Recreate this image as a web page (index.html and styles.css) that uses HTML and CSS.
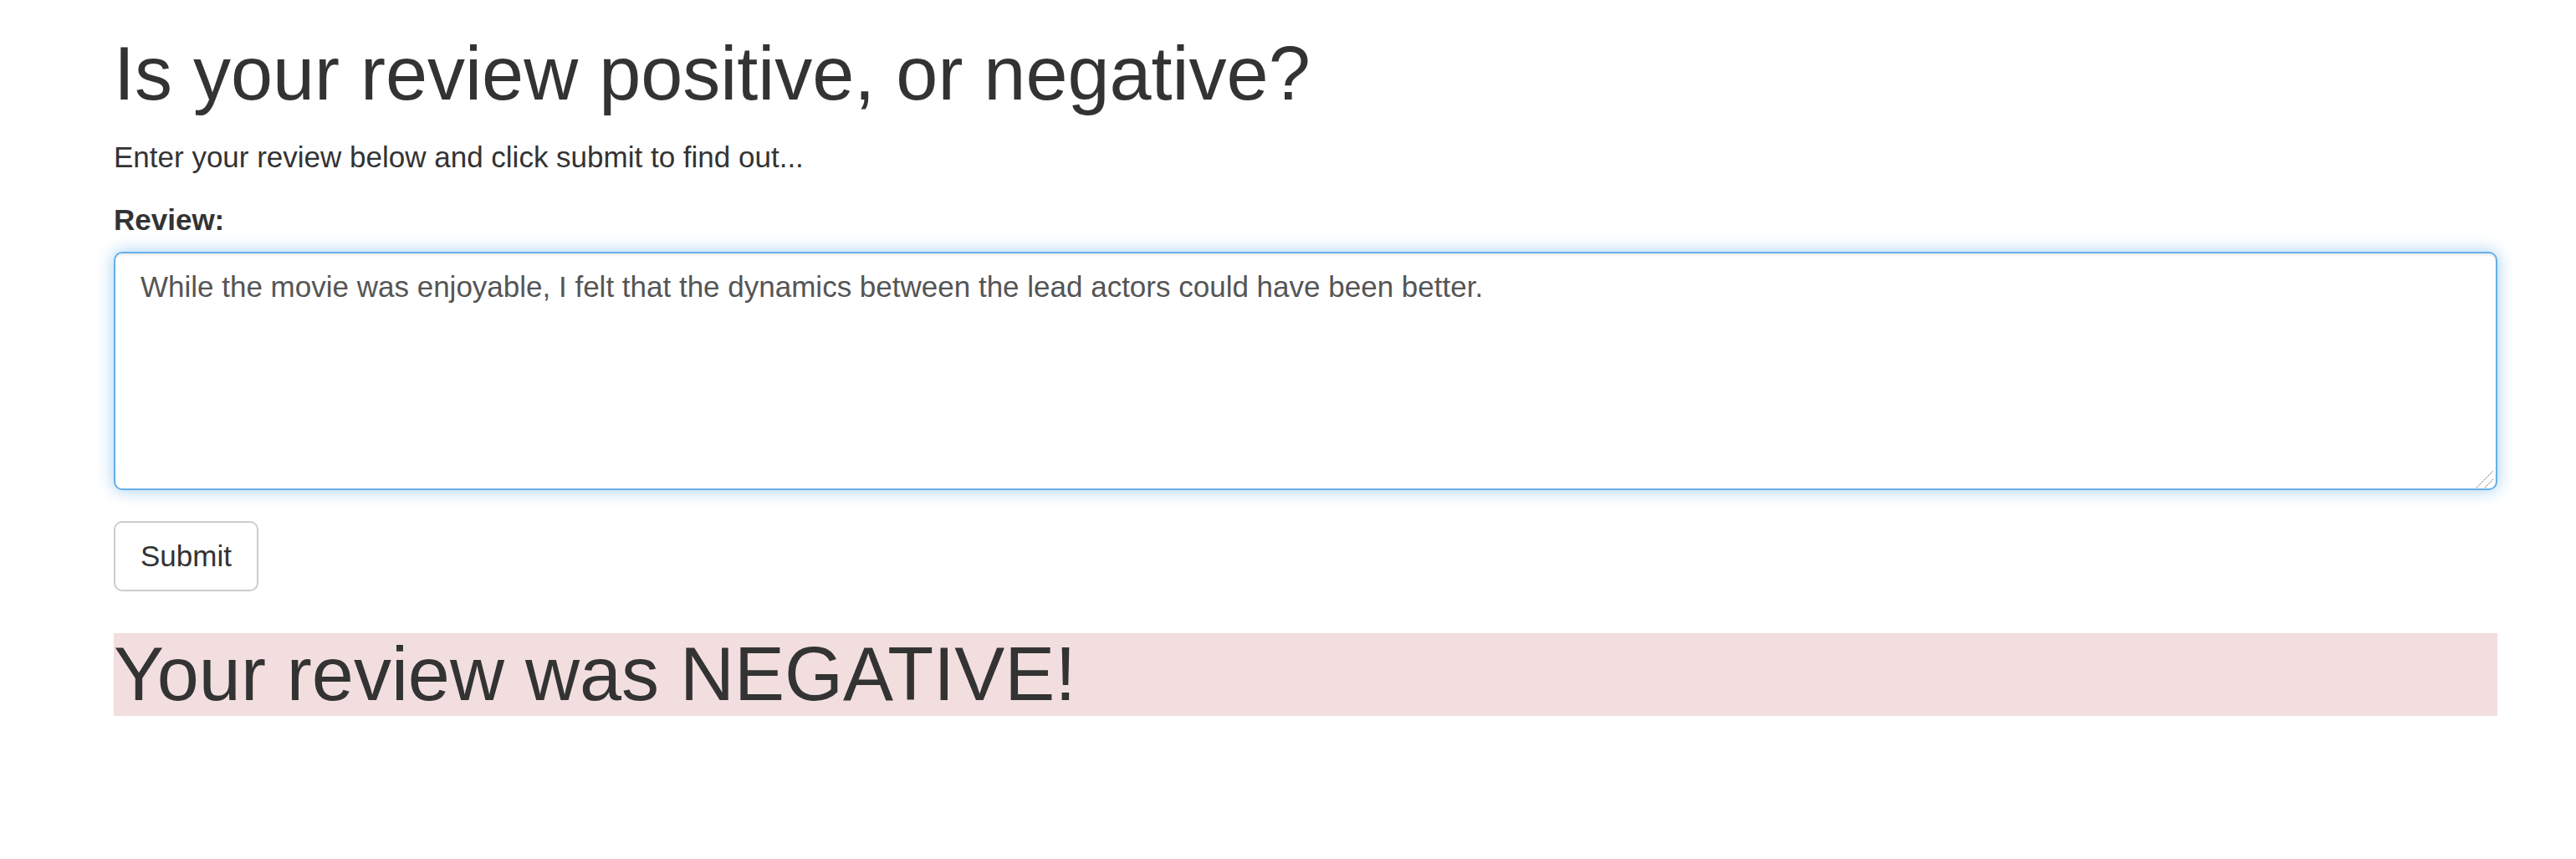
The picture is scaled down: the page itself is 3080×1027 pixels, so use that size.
FILE: index.html
```html
<!DOCTYPE html>
<html lang="en">
<head>
<meta charset="utf-8">
<title>Sentiment Review</title>
<link rel="stylesheet" href="styles.css">
</head>
<body>
<div class="container">
  <h1 class="title">Is your review positive, or negative?</h1>
  <p class="lead-text">Enter your review below and click submit to find out...</p>
  <form class="review-form">
    <div class="form-group">
      <label class="field-label" for="review">Review:</label>
      <div class="textarea-wrap">
        <textarea class="form-control is-focused" id="review" rows="5">While the movie was enjoyable, I felt that the dynamics between the lead actors could have been better.</textarea>
        <svg class="grip" width="24" height="24" viewBox="0 0 24 24" aria-hidden="true">
          <line x1="2" y1="23" x2="22" y2="3" stroke="#666" stroke-width="1" stroke-dasharray="1.5 1"/>
          <line x1="12" y1="23" x2="22" y2="13" stroke="#666" stroke-width="1" stroke-dasharray="1.5 1"/>
        </svg>
      </div>
    </div>
    <button type="button" class="btn btn-default">Submit</button>
  </form>
  <h1 class="result bg-danger">Your review was NEGATIVE!</h1>
</div>
</body>
</html>
```
FILE: styles.css
```css
* {
  box-sizing: border-box;
}

html, body {
  margin: 0;
  padding: 0;
  background: #fff;
}

body {
  font-family: "Liberation Sans", Arial, Helvetica, sans-serif;
  font-size: 35px;
  line-height: 50px;
  color: #333;
}

.container {
  width: 2850px;
  margin-left: 136px;
}

.title {
  font-family: inherit;
  font-weight: 500;
  font-size: 90px;
  line-height: 99px;
  margin: 39px 0 25px;
  color: #333;
}

.lead-text {
  margin: 0 0 25px;
}

.review-form {
  margin: 0;
}

.form-group {
  margin-bottom: 37.5px;
}

.field-label {
  display: inline-block;
  max-width: 100%;
  margin-bottom: 12.5px;
  font-weight: bold;
}

.textarea-wrap {
  position: relative;
}

.grip {
  position: absolute;
  right: 3px;
  bottom: 2px;
  pointer-events: none;
}

.form-control {
  display: block;
  width: 100%;
  height: 285px;
  padding: 15px 30px;
  font-family: inherit;
  font-size: 35px;
  line-height: 50px;
  color: #555;
  background-color: #fff;
  border: 2.5px solid #ccc;
  border-radius: 10px;
  resize: none;
  outline: none;
  box-shadow: inset 0 2.5px 2.5px rgba(0, 0, 0, 0.075);
}

.form-control.is-focused {
  border-color: #66afe9;
  box-shadow: inset 0 2.5px 2.5px rgba(0, 0, 0, 0.075), 0 0 20px rgba(102, 175, 233, 0.6);
}

.btn {
  display: inline-block;
  margin: 0;
  padding: 15px 30px;
  font-family: inherit;
  font-size: 35px;
  line-height: 50px;
  font-weight: normal;
  text-align: center;
  white-space: nowrap;
  vertical-align: middle;
  cursor: pointer;
  border: 2.5px solid transparent;
  border-radius: 10px;
}

.btn-default {
  color: #333;
  background-color: #fff;
  border-color: #ccc;
}

.result {
  font-family: inherit;
  font-weight: 500;
  font-size: 90px;
  line-height: 99px;
  margin: 50px 0 25px;
  color: #333;
}

.bg-danger {
  background-color: #f2dede;
}
```
